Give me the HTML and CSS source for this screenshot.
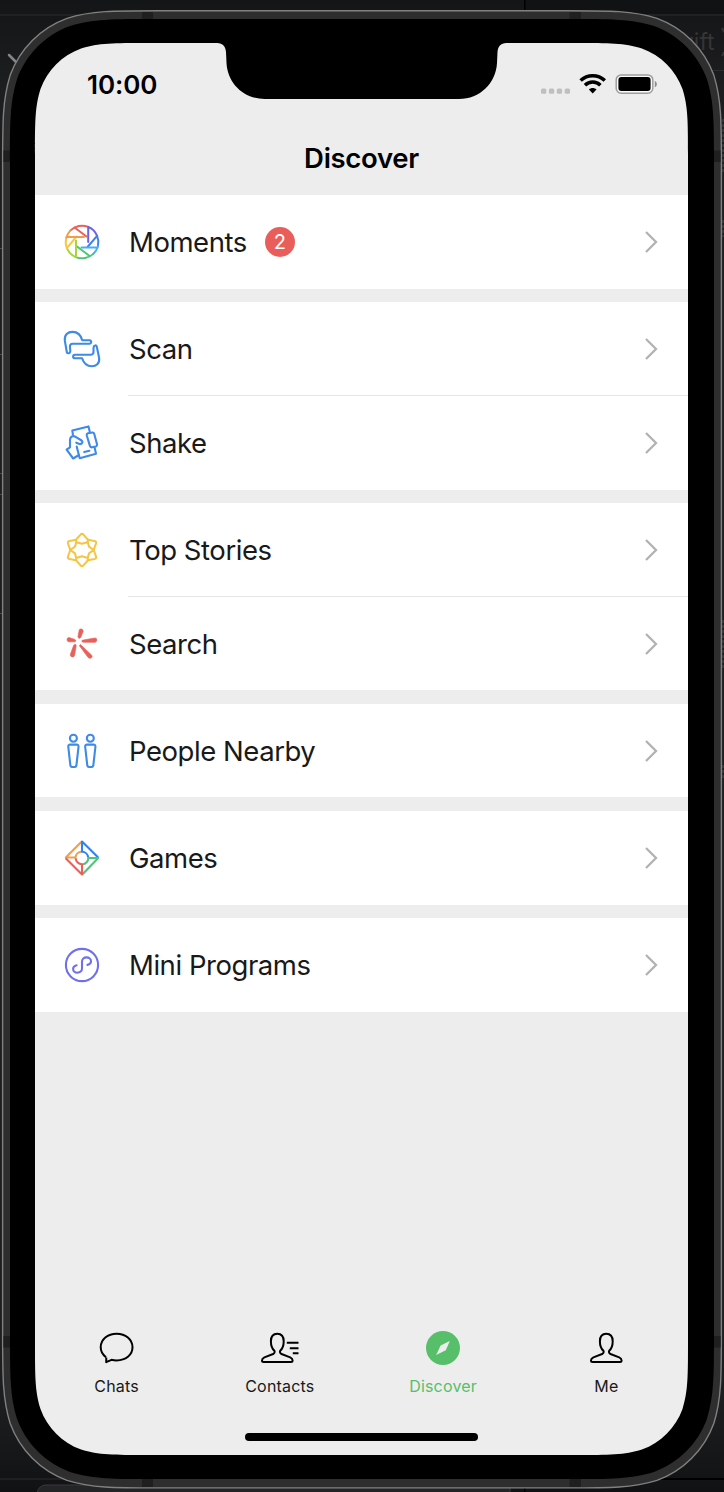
FILE: index.html
```html
<!DOCTYPE html>
<html lang="en">
<head>
<meta charset="utf-8">
<title>Discover</title>
<link rel="stylesheet" href="styles.css">
</head>
<body>
<div class="desktop">
  <svg class="device" viewBox="0 0 724 1492" aria-hidden="true">
    <defs><linearGradient id="desk" x1="0" y1="0" x2="0" y2="1"><stop offset="0" stop-color="#141516"/><stop offset=".06" stop-color="#1d1e20"/><stop offset=".94" stop-color="#1d1e20"/><stop offset="1" stop-color="#111213"/></linearGradient></defs>
    <!-- desktop behind the phone -->
    <path fill="url(#desk)" d="M0 0H724V1492H0z"/>
    <path fill="#111213" d="M525 0H724V14H525z"/>
    <path fill="#000" d="M524 0h1.500v12h-1.500zM600 1478h124v2H600zM524 1486h1.500v6h-1.500z"/>
    <path stroke="#2b2c2e" fill="none" d="M0 15H130M600 15H724M690 70.500H724M0 1479H80"/>
    <path stroke="#3a3b3d" fill="#242526" d="M37 1493q2-8 9-8H510v8z"/>
    <path stroke="#85868a" stroke-width="2.500" stroke-linecap="round" d="M9 55l8 8"/>
    <text class="desk-text" x="675" y="50">wift</text>
    <path stroke="#343537" stroke-width="2" fill="none" d="M722 28l2 4M722 56l2-4"/>
    <path stroke="#4a4b4d" d="M0 248.500h2M0 354.500h2M0 473.500h2M0 494.500h2M0 613.500h2"/>
    <path stroke="#4a4b4d" stroke-dasharray="3 2" d="M723 119v54M723 220v17M723 620v50M723 765v14"/>
    <!-- metal edge -->
    <path fill="#2e2e2e" stroke="#818181" stroke-width="1.400" d="M158.500 10.700H565.500c44.900 0 67.300 0 91.500 7.600c26.400 9.600 47.200 30.400 56.800 56.800c7.600 24.200 7.600 46.600 7.600 91.500V1332c0 44.900 0 67.300-7.600 91.500c-9.600 26.400-30.400 47.200-56.800 56.800c-24.200 7.600-46.600 7.600-91.500 7.600H158.500c-44.900 0-67.300 0-91.500-7.600c-26.400-9.600-47.200-30.400-56.800-56.800c-7.600-24.200-7.600-46.600-7.600-91.500V166.600c0-44.900 0-67.300 7.600-91.500c9.600-26.400 30.400-47.200 56.800-56.800c24.200-7.600 46.600-7.600 91.500-7.600z"/>
    <path fill="#1f1f1f" d="M142 12h11v8h-11zM569.500 12h11.500v8h-11.500zM142 1478h11v9h-11zM569.500 1478h11.500v9h-11.500zM3.500 150.500H11v11.500H3.500zM713 150.500h7.500v11.500H713zM3.500 1336H11v11.500H3.500zM713 1336h7.500v11.500H713z"/>
    <!-- bezel -->
    <path fill="#000" d="M155.200 19H568.800c41.800 0 62.700 0 85.200 7.100c24.600 9 43.900 28.300 52.900 52.900c7.100 22.500 7.100 43.400 7.100 85.200V1333.800c0 41.800 0 62.700-7.100 85.200c-9 24.600-28.300 43.900-52.900 52.900c-22.500 7.100-43.400 7.100-85.200 7.100H155.200c-41.800 0-62.700 0-85.200-7.100c-24.600-9-43.900-28.300-52.900-52.900c-7.100-22.500-7.100-43.400-7.100-85.200V164.200c0-41.800 0-62.700 7.100-85.200c9-24.600 28.300-43.900 52.900-52.900c22.500-7.100 43.400-7.100 85.200-7.100z"/>
    <!-- display with notch -->
    <path fill="#ededed" d="M146.600 43H217c6 0 8.500 3.500 9 9l.5 11c1 20 17 36 38 36H459c21 0 37-16 38-36l.5-11c.5-5.500 3-9 9-9H576.400c32.100 0 48.200 0 65.500 5.500c18.900 6.800 33.800 21.700 40.600 40.600c5.500 17.300 5.500 33.400 5.500 65.500V1343.400c0 32.100 0 48.200-5.500 65.500c-6.800 18.900-21.700 33.800-40.600 40.600c-17.300 5.500-33.400 5.500-65.500 5.500H146.600c-32.100 0-48.200 0-65.500-5.500c-18.900-6.800-33.800-21.700-40.600-40.600c-5.500-17.300-5.500-33.400-5.500-65.500V154.600c0-32.100 0-48.200 5.500-65.500c6.800-18.900 21.700-33.800 40.600-40.600c17.300-5.500 33.400-5.500 65.500-5.500z"/>
  </svg>

  <main class="screen">
    <header class="status">
      <span class="clock">10:00</span>
      <svg class="signals" viewBox="0 0 118 24" aria-hidden="true">
        <g fill="#bfbfbf"><rect x="1" y="15.500" width="5.300" height="5.300" rx="1.500"/><rect x="8.900" y="15.500" width="5.300" height="5.300" rx="1.500"/><rect x="16.800" y="15.500" width="5.300" height="5.300" rx="1.500"/><rect x="24.700" y="15.500" width="5.300" height="5.300" rx="1.500"/></g>
        <g fill="none" stroke="#000" stroke-width="3.500"><path d="M40.600 7.600c6.800-6.600 17.400-6.600 24.200 0"/><path d="M45 12.200c4.300-4.200 11.100-4.200 15.400 0"/></g>
        <path d="M48.900 16.600c2.200-2 5.400-2 7.600 0l-3.800 3.900z"/>
        <rect x="76.200" y="1.900" width="36.600" height="18.300" rx="5" fill="#fafafa" stroke="#9d9d9d" stroke-width="1.500"/>
        <rect x="78.400" y="4" width="32.200" height="14" rx="3"/>
        <path fill="#8c8c8c" d="M114.800 7.900c2.700.8 2.700 5.500 0 6.300z"/>
      </svg>
    </header>
    <h1 class="title">Discover</h1>

    <div class="groups">
      <section class="group">
        <div class="row">
          <svg class="icon" viewBox="0 0 40 40"><g fill="none" stroke-width="2" stroke-linecap="round">
            <path stroke="#e9615c" d="M8.500 8.400A16.300 16.300 0 0 1 26.200 4.900M12.500 5.500L24.500 14.500"/>
            <path stroke="#6c63e4" d="M26.200 4.900A16.300 16.300 0 0 1 35.100 13.800M26.200 4.900V20"/>
            <path stroke="#3f83e6" d="M35.100 13.800A16.300 16.300 0 0 1 35.900 24M35.100 13.800L25.500 25"/>
            <path stroke="#47aef3" d="M36 24A16.300 16.300 0 0 1 31.500 31.600M35.800 25.600H19.500"/>
            <path stroke="#4fc57a" d="M31.500 31.600A16.300 16.300 0 0 1 13.800 35.100M28 34.200L15 24.500"/>
            <path stroke="#a7d63b" d="M13.800 35.100A16.300 16.300 0 0 1 4.900 26.200M14 35V18.500"/>
            <path stroke="#f5c944" d="M4.900 26.200A16.300 16.300 0 0 1 4.400 15.500M4.900 26.200L14.500 14.500"/>
            <path stroke="#f19b4c" d="M4.400 15.500A16.300 16.300 0 0 1 8.500 8.400M4.400 15H22"/>
          </g></svg>
          <span class="label">Moments</span><span class="badge">2</span>
          <svg class="chevron" viewBox="0 0 14 24"><path d="M2 2l10 10L2 22"/></svg>
        </div>
      </section>

      <section class="group">
        <div class="row">
          <svg class="icon" viewBox="0 0 40 40"><g class="line blue">
            <path d="M4.900 23.500L2.900 12C2 5.500 6 2.900 10.500 2.900C15 2.900 18.500 5 20.200 11.200H27.500Q29.300 11.400 29.200 13Q29.200 14.600 27.500 14.800H10.500Q8 15 7.900 17.500L8.300 21.500Q8.400 24.200 6.600 24.200Q5.300 24.300 4.900 23.500z"/>
            <path d="M34.700 17.300L37.100 28.700C38 35 34 37.300 29.700 37.300C25.400 37.300 22 35.200 20.100 29.300H13Q11.100 29.100 11.100 27.400Q11.100 25.900 13 25.700H29Q31.500 25.400 31.500 23V19.500Q31.600 16.700 33.300 16.400Q34.300 16.200 34.700 17.300z"/>
          </g></svg>
          <span class="label">Scan</span>
          <svg class="chevron" viewBox="0 0 14 24"><path d="M2 2l10 10L2 22"/></svg>
        </div>
        <div class="row divided">
          <svg class="icon" viewBox="0 0 40 40"><g class="line blue">
            <path d="M10.900 11.500L10.300 7.400L26.500 3.400L27.700 8.500"/>
            <path d="M32.700 25L34 30.700L17.700 35.200L14.700 23.500"/>
            <path d="M24.700 12.200Q24.500 10.700 26 10.300L30.300 9.500Q31.800 9.300 32.200 10.700L35 21.300Q35.300 22.900 33.900 23.400L29.900 24.300Q28.400 24.600 28 23.100z"/>
            <path d="M8 24.300V17C8 13.500 11 12.200 13.600 13.800L19.600 17.500Q21.200 18.900 19.800 20.400Q18.500 21.400 16.800 20.800L14.300 19.700M8 24.300L4.600 26.700L11.200 35.500L17 32"/>
            <path d="M22.200 29.100l5.200-1.400"/>
          </g></svg>
          <span class="label">Shake</span>
          <svg class="chevron" viewBox="0 0 14 24"><path d="M2 2l10 10L2 22"/></svg>
        </div>
      </section>

      <section class="group">
        <div class="row">
          <svg class="icon" viewBox="0 0 40 40"><g class="line yellow">
            <path d="M18.600 4.600Q20 3.200 21.400 4.600L26 9.800L32.500 11Q34.600 11.500 34 13.500L31.700 20L34 26.500Q34.600 28.500 32.500 29L26 30.200L21.400 35.400Q20 36.800 18.600 35.400L14 30.200L7.500 29Q5.400 28.500 6 26.500L8.300 20L6 13.500Q5.400 11.500 7.500 11L14 9.800z"/>
            <path d="M14 9.800L14.200 12L20 13.800L25.800 12L26 9.800M25.800 12L27 16.700L31.700 20L27 23.300L25.800 28L26 30.200M25.800 28L20 26.200L14.200 28L14 30.200M14.200 28L13 23.300L8.300 20L13 16.700L14.200 12"/>
          </g></svg>
          <span class="label">Top Stories</span>
          <svg class="chevron" viewBox="0 0 14 24"><path d="M2 2l10 10L2 22"/></svg>
        </div>
        <div class="row divided">
          <svg class="icon" viewBox="0 0 40 40"><g fill="#e8605a" stroke="#e8605a" stroke-width=".7">
            <path d="M17.300 5.700Q18.100 4.700 19.700 5.100Q21.500 5.700 21.100 7.500L18.800 13.300Q18.200 14.500 17 14.200Q15.800 13.800 16 12.500z"/>
            <path d="M7 13.600L12.800 15.400Q14 16 13.700 17Q13.400 17.800 12.300 17.800L6.800 17.800Q4.900 17.500 5 15.500Q5.200 13.700 7 13.600z"/>
            <path d="M20.200 16.300L33 14Q34.800 14 34.800 16Q34.800 18 33 18.300L21.500 18.200Q20.200 18.300 20 17.400Q19.700 16.700 20.200 16.300z"/>
            <path d="M18.400 20.500L29.500 31Q30.800 32.600 29.400 33.800Q27.700 35 26.200 33.500L17.800 22.200Q17.300 20.800 18.400 20.500z"/>
            <path d="M11.800 21.100Q12.500 20.200 13.500 20.600Q14.500 21 14.100 22.200L12.500 31.700Q11.800 33.300 10 32.900Q7.800 32.200 8.400 30.200z"/>
          </g></svg>
          <span class="label">Search</span>
          <svg class="chevron" viewBox="0 0 14 24"><path d="M2 2l10 10L2 22"/></svg>
        </div>
      </section>

      <section class="group">
        <div class="row">
          <svg class="icon" viewBox="0 0 40 40"><g class="line blue">
            <circle cx="11.400" cy="7.300" r="3.500"/><circle cx="28.300" cy="7.300" r="3.500"/>
            <path d="M8.200 13.600H14.600Q16.700 13.600 16.500 16L14.400 34.500Q14.100 36 12.800 36H10Q8.700 36 8.400 34.500L6.300 16Q6.100 13.600 8.200 13.600z"/>
            <path d="M25.100 13.600H31.500Q33.600 13.600 33.400 16L31.300 34.500Q31 36 29.700 36H26.900Q25.600 36 25.300 34.500L23.200 16Q23 13.600 25.100 13.600z"/>
          </g></svg>
          <span class="label">People Nearby</span>
          <svg class="chevron" viewBox="0 0 14 24"><path d="M2 2l10 10L2 22"/></svg>
        </div>
      </section>

      <section class="group">
        <div class="row">
          <svg class="icon" viewBox="0 0 40 40"><g fill="none" stroke-width="2.100" stroke-linejoin="round">
            <path stroke="#ef9f4f" d="M19.500 3.800L3.800 19.500H13.500A6.300 6.300 0 0 1 19.500 13.700"/>
            <path stroke="#2f83ee" d="M36.200 19.500L20 3.500V13.700A6.300 6.300 0 0 1 26.200 19.500"/>
            <path stroke="#4fc57a" d="M20.500 36.200L36.300 20H26.300A6.300 6.300 0 0 1 20.500 26.300"/>
            <path stroke="#e9605b" d="M3.700 20.300L20 36.400V26.300A6.300 6.300 0 0 1 13.700 20.300"/>
          </g></svg>
          <span class="label">Games</span>
          <svg class="chevron" viewBox="0 0 14 24"><path d="M2 2l10 10L2 22"/></svg>
        </div>
      </section>

      <section class="group">
        <div class="row">
          <svg class="icon" viewBox="0 0 40 40"><g class="line purple">
            <circle cx="20" cy="20" r="16.100"/>
            <path d="M25.400 19.900C27.700 19.400 29 18 29 16.200C29 14 27 12.400 24.600 12.400C22 12.400 20 14.200 20 16.700V23.600C20 26 18 27.700 15.500 27.700C13 27.700 11.100 26 11.100 23.900C11.100 22 12.500 20.700 14.600 20.200"/>
          </g></svg>
          <span class="label">Mini Programs</span>
          <svg class="chevron" viewBox="0 0 14 24"><path d="M2 2l10 10L2 22"/></svg>
        </div>
      </section>
    </div>

    <nav class="tabs">
      <div class="tab">
        <svg class="tab-icon" viewBox="0 0 40 40"><path class="ink" d="M9 29.300C5.500 26.600 3.700 23.300 3.700 19.300C3.700 11.400 10.700 5.700 19.600 5.700S35.500 11.400 35.500 19.300S28.600 32.400 19.600 32.400Q17 32.400 14.500 31.800L9.200 34.200L9.300 29.500"/></svg>
        <span>Chats</span>
      </div>
      <div class="tab">
        <svg class="tab-icon" viewBox="0 0 40 40"><path class="ink" d="M14.400 22.800C11.800 20.500 10.900 17.500 10.900 13.200C10.900 8.500 13.200 5.700 17.300 5.700S23.700 8.500 23.700 13.200C23.700 17.500 22.800 20.500 20.200 22.800C19.500 24 20.200 25.300 21.500 26L30.200 29.400Q32.600 30.500 32.600 32.500Q32.600 34 31 34H3.600Q2 34 2 32.500Q2 30.500 4.400 29.400L13.100 26C14.400 25.300 15.100 24 14.400 22.800z"/><path class="ink" d="M26.800 14.700H38.500M29.800 20.200H38.500M32.800 25.300H38.500"/></svg>
        <span>Contacts</span>
      </div>
      <div class="tab active">
        <svg class="tab-icon" viewBox="0 0 40 40"><circle cx="20" cy="20" r="17" fill="#57bf6a"/><path fill="#ededed" d="M26.800 12.900L22.800 22.300L13.200 27.100L17.600 17.500z"/></svg>
        <span>Discover</span>
      </div>
      <div class="tab">
        <svg class="tab-icon" viewBox="0 0 40 40"><path class="ink" d="M17.400 22.800C14.800 20.500 13.900 17.500 13.900 13.200C13.900 8.500 16.200 5.700 20.300 5.700S26.700 8.500 26.700 13.200C26.700 17.500 25.800 20.500 23.200 22.800C22.500 24 23.200 25.300 24.500 26L33.200 29.400Q35.600 30.500 35.600 32.500Q35.600 34 34 34H6.600Q5 34 5 32.500Q5 30.500 7.400 29.400L16.100 26C17.400 25.300 18.100 24 17.400 22.800z"/></svg>
        <span>Me</span>
      </div>
    </nav>
    <div class="home-bar"></div>
  </main>
</div>
</body>
</html>
```
FILE: styles.css
```css
* { box-sizing: border-box; }
body { margin: 0; background: #1b1c1e; font-family: Inter, "Liberation Sans", sans-serif; color: #191919; }
.desktop { position: relative; width: 724px; height: 1492px; overflow: hidden; padding: 43px 36px 37px 35px; }
.device { position: absolute; inset: 0; width: 724px; height: 1492px; }
.desk-text { font-size: 23px; fill: #343537; }
.screen { position: relative; height: 1412px; display: flex; flex-direction: column; }
.status { height: 84px; padding: 27px 30px 0 52px; display: flex; justify-content: space-between; align-items: flex-start; }
.clock { font-size: 26px; line-height: 30px; font-weight: 600; letter-spacing: -0.1px; color: #000; }
.signals { width: 118px; height: 24px; margin-top: 3px; }
.title { margin: 0; height: 68px; line-height: 62px; text-align: center; font-size: 27.5px; font-weight: 600; letter-spacing: -0.3px; color: #000; }
.groups { display: flex; flex-direction: column; gap: 13.33px; }
.group { background: #fff; }
.row { position: relative; height: 93.75px; display: flex; align-items: center; padding: 0 30px 0 27px; }
.divided::before { content: ""; position: absolute; top: -1px; left: 93px; right: 0; height: 1px; background: #e6e6e6; }
.icon { width: 40px; height: 40px; margin-right: 27px; }
.label { font-size: 27.5px; line-height: 34px; letter-spacing: -0.45px; white-space: nowrap; }
.badge { width: 30px; height: 30px; margin-left: 18px; border-radius: 50%; background: #e95e5a; color: #fff; font-size: 20px; line-height: 31px; text-align: center; }
.chevron { width: 14px; height: 24px; margin-left: auto; fill: none; stroke: #b2b2b2; stroke-width: 2.3px; }
.line { fill: none; stroke-width: 2.1px; stroke-linejoin: round; stroke-linecap: round; }
.blue { stroke: #3d8ae8; }
.yellow { stroke: #f5c645; }
.purple { stroke: #6f70ea; }
.tabs { margin-top: auto; height: 107px; display: flex; }
.tab { flex: 1; display: flex; flex-direction: column; align-items: center; font-size: 16px; line-height: 20px; letter-spacing: 0.2px; }
.tab-icon { width: 40px; height: 40px; margin-bottom: 8px; }
.ink { fill: none; stroke: #000; stroke-width: 2px; stroke-linejoin: round; }
.active { color: #57bf6a; }
.home-bar { width: 233px; height: 8px; margin: -2px auto 14px; border-radius: 4px; background: #000; }
```
